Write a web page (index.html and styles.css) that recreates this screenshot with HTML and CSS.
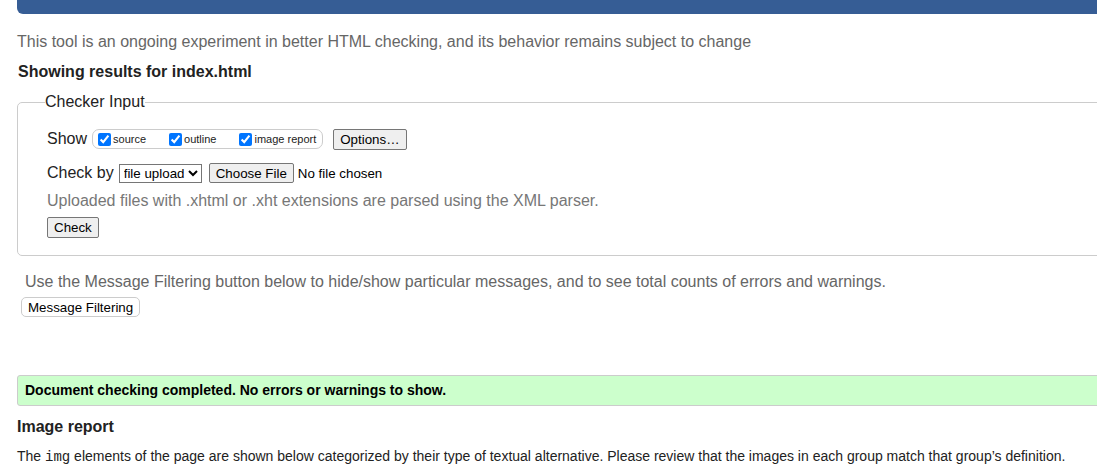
FILE: index.html
```html
<!DOCTYPE html>
<html lang="en">
<head>
<meta charset="utf-8">
<title>Nu Html Checker</title>
<link rel="stylesheet" href="styles.css">
</head>
<body>
<div class="page">
  <div class="topbar"></div>
  <p class="intro">This tool is an ongoing experiment in better HTML checking, and its behavior remains subject to change</p>
  <h2 class="results">Showing results for index.html</h2>
  <fieldset class="checker">
    <legend>Checker Input</legend>
    <div class="row show-row">
      <span class="label">Show</span>
      <span class="showbox">
        <label class="opt"><input type="checkbox" checked>source</label>
        <label class="opt"><input type="checkbox" checked>outline</label>
        <label class="opt"><input type="checkbox" checked>image report</label>
      </span>
      <button class="btn options">Options…</button>
    </div>
    <div class="row by-row">
      <span class="label">Check by</span>
      <select class="sel"><option>file upload</option></select>
      <span class="file"><button class="btn choose">Choose File</button><span class="nofile">No file chosen</span></span>
    </div>
    <p class="note">Uploaded files with .xhtml or .xht extensions are parsed using the XML parser.</p>
    <button class="btn check">Check</button>
  </fieldset>
  <p class="filter-note">Use the Message Filtering button below to hide/show particular messages, and to see total counts of errors and warnings.</p>
  <button class="filter-btn">Message Filtering</button>
  <div class="success">Document checking completed. No errors or warnings to show.</div>
  <h2 class="report">Image report</h2>
  <p class="report-text">The <code>img</code> elements of the page are shown below categorized by their type of textual alternative. Please review that the images in each group match that group’s definition.</p>
</div>
</body>
</html>
```
FILE: styles.css
```css
html, body {
  margin: 0;
  padding: 0;
  overflow: hidden;
  background: #fff;
}
body {
  font-family: "Liberation Sans", Arial, sans-serif;
  color: #222;
}
.page {
  width: 1200px;
  padding-left: 17px;
}
.topbar {
  height: 14px;
  background: #365d95;
  border-bottom-left-radius: 6px;
}
.intro {
  margin: 19px 0 0 0;
  font-size: 16px;
  line-height: 18px;
  color: #666;
}
.results {
  margin: 12px 0 0 1px;
  font-size: 16px;
  line-height: 18px;
  font-weight: bold;
  color: #222;
}
.checker {
  margin: 12px 0 0 0;
  padding: 17px 0 17px 29px;
  border: 1px solid #ccc;
  border-radius: 5px;
  min-inline-size: 0;
}
.checker legend {
  margin-left: -2px;
  padding: 0;
  font-size: 16px;
  color: #222;
}
.row {
  display: flex;
  align-items: center;
  font-size: 16px;
  color: #222;
}
.show-row {
  height: 22px;
}
.label {
  margin-right: 5px;
}
.showbox {
  display: inline-flex;
  align-items: center;
  height: 18px;
  padding: 0 6px 0 2px;
  border: 1px solid #ccc;
  border-radius: 7px;
  font-size: 11px;
}
.opt {
  display: inline-flex;
  align-items: center;
  margin-right: 20px;
}
.opt:last-child {
  margin-right: 0;
}
.opt input {
  margin: 0 2px 0 3px;
  width: 13px;
  height: 13px;
}
.btn {
  font-family: "Liberation Sans", Arial, sans-serif;
  font-size: 13.333px;
  color: #000;
  background: #efefef;
  border: 1px solid #767676;
  border-radius: 2px;
  padding: 1px 6px;
  height: 21px;
}
.options {
  margin-left: 10px;
}
.by-row {
  margin-top: 13px;
  height: 20px;
}
.sel {
  font-family: "Liberation Sans", Arial, sans-serif;
  font-size: 13.333px;
  height: 19px;
  margin-left: 0;
  border: 1px solid #767676;
  border-radius: 0;
  color: #000;
  background: #fff;
}
.file {
  display: inline-flex;
  align-items: center;
  margin-left: 7px;
  font-size: 13.333px;
  color: #000;
}
.choose {
  margin-right: 4px;
  height: 20px;
}
.note {
  margin: 9px 0 0 0;
  font-size: 16px;
  line-height: 18px;
  color: #777;
}
.check {
  margin-top: 7px;
  display: block;
  height: 21px;
}
.filter-note {
  margin: 17px 0 0 8px;
  font-size: 16px;
  line-height: 18px;
  color: #666;
}
.filter-btn {
  display: block;
  margin: 6px 0 0 4px;
  font-family: "Liberation Sans", Arial, sans-serif;
  font-size: 13.333px;
  color: #000;
  background: #fff;
  border: 1px solid #ccc;
  border-radius: 5px;
  padding: 1px 6px;
  height: 20px;
}
.success {
  margin-top: 58px;
  padding: 6px 7px;
  height: 17px;
  line-height: 17px;
  background: #ccffcc;
  border: 1px solid #ccc;
  border-radius: 3px;
  font-size: 14px;
  font-weight: bold;
  color: #000;
}
.report {
  margin: 12px 0 0 0;
  font-size: 16px;
  line-height: 18px;
  font-weight: bold;
  color: #222;
}
.report-text {
  margin: 12px 0 0 0;
  font-size: 14px;
  line-height: 16px;
  color: #222;
}
.report-text code {
  font-family: "Liberation Mono", "Courier New", monospace;
  font-size: 14px;
}
```
